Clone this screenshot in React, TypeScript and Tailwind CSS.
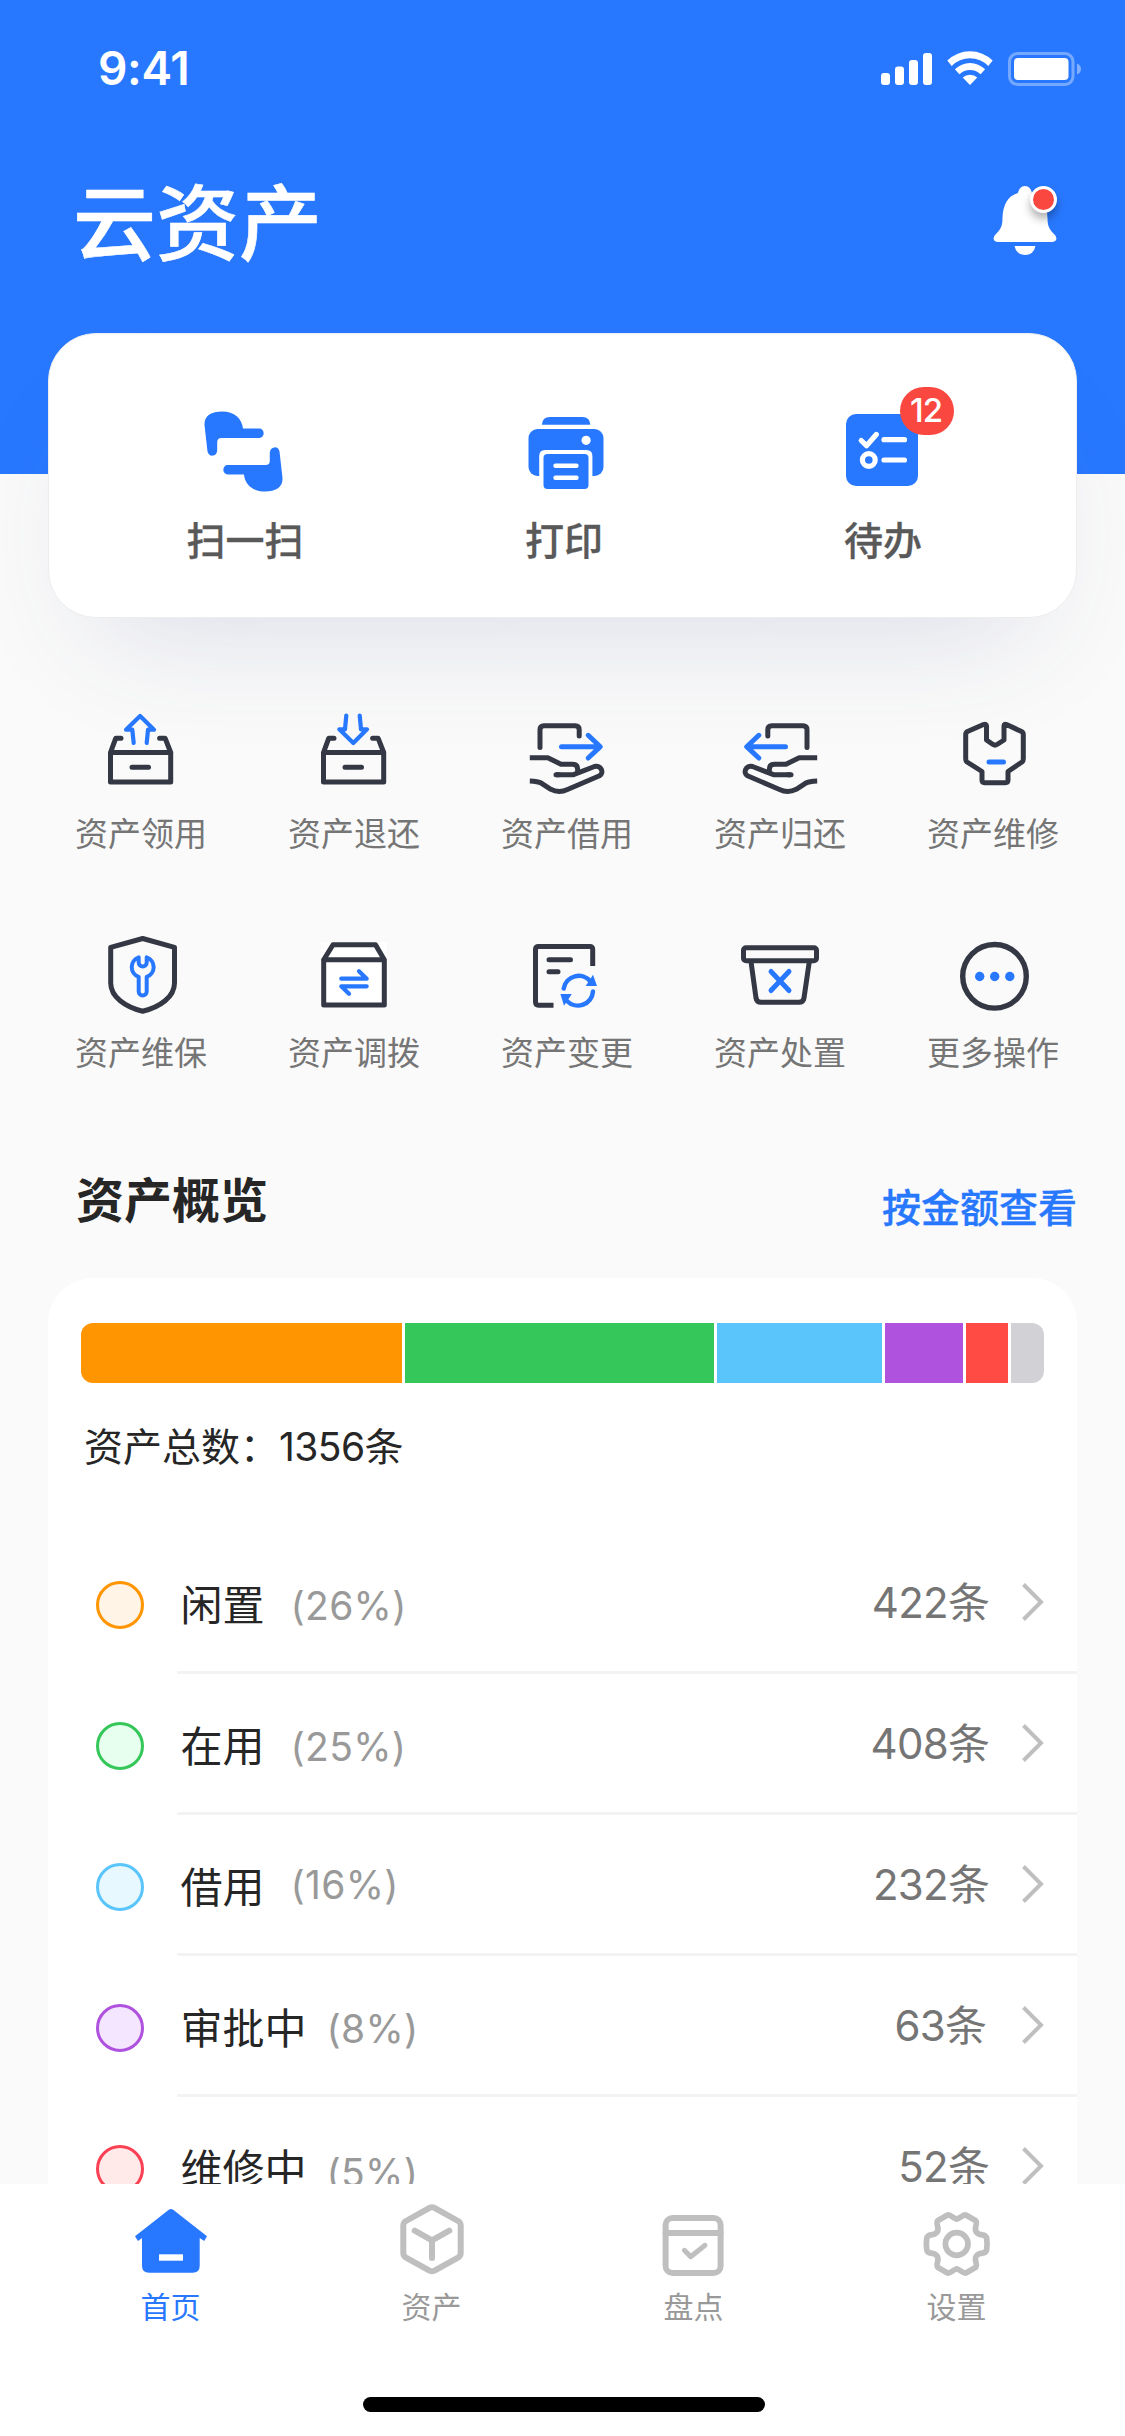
import type { ReactNode } from "react";

const BLUE = "#2878ff";
const DARK = "#343844";
const GREY = "#bfbfbf";

/* ---------- status bar ---------- */

function StatusBar() {
  return (
    <div className="flex h-[132px] items-start justify-between pt-[41px] pl-[98px] pr-[43px]">
      <span className="text-[46px] leading-[54px] font-semibold tracking-[-0.3px]">9:41</span>
      <svg className="mt-[9px]" width="202" height="38" viewBox="880 50 202 38" fill="#fff">
        <rect x="881" y="73" width="9" height="12" rx="3" />
        <rect x="895" y="66.5" width="9" height="18.5" rx="3" />
        <rect x="909" y="60" width="9" height="25" rx="3" />
        <rect x="923" y="53" width="9" height="32" rx="3" />
        <path d="M947.3 60.5a32.500 32.500 0 0 1 45.400 0l-4.400 5.500a25.500 25.500 0 0 0-36.600 0z" />
        <path d="M954.900 69.300a21.500 21.500 0 0 1 30.200 0l-4.500 5a15 15 0 0 0-21.200 0z" />
        <path d="M962.700 77.600a10.500 10.500 0 0 1 14.600 0L970 85z" />
        <rect x="1009.500" y="53.500" width="63.500" height="31" rx="8" fill="none" stroke="#fff" strokeWidth="3" opacity=".36" />
        <path d="M1077 63.500q4 1.500 4 5.500t-4 5.500z" opacity=".42" />
        <rect x="1014" y="58" width="54.500" height="22" rx="4" />
      </svg>
    </div>
  );
}

function Bell() {
  return (
    <div className="relative h-[72px] w-[66px]">
      <svg width="66" height="72" viewBox="991.5 185 66 72" fill="#fff">
        <path d="M1024.500 186c4 0 6 3 7 7C1042 196 1046.500 205 1047 218C1047 228 1050 230 1054 234.500C1057.500 238.500 1056 242 1051 242H998C993 242 991.500 238.500 995 234.500C999 230 1002 228 1002 218C1002.500 205 1007 196 1017.500 193C1018.500 189 1020.500 186 1024.500 186Z" />
        <path d="M1014 246h21q-2 9-10.500 9t-10.500-9z" />
      </svg>
      <span className="absolute top-[1px] left-[37.500px] size-[27px] rounded-full border-[3px] border-white bg-[#fa4840] shadow-[0_6px_9px_rgba(0,0,0,0.3)]" />
    </div>
  );
}

/* ---------- main actions ---------- */

const scanHand =
  "M242.500 428H259a4.200 4.700 0 0 1 0 9.400H221q-4.300 0-4.300 4.300V450a5 6 0 0 1-9.700 1L204 424.500C203.600 415 211 411 221.500 411C234 411 241.500 418 242.500 428Z";

const ScanIcon = (
  <svg width="84" height="84" viewBox="201.500 408.500 84 84" fill={BLUE}>
    <path d={scanHand} />
    <path d={scanHand} transform="rotate(180 243 451)" />
  </svg>
);

const PrintIcon = (
  <svg width="84" height="84" viewBox="521.500 409 84 84" fill={BLUE}>
    <path d="M542.400 424.700q.3-7.700 8-7.700h32.400q7.700 0 8 7.700z" />
    <rect x="529" y="429" width="75" height="47" rx="9" />
    <path d="M539.700 478V456q0-6 6-6h41.200q6 0 6 6v22z" fill="#fff" />
    <rect x="544" y="454" width="45" height="35" rx="4" />
    <path d="M556 465.700h21M556 477.700h21" stroke="#fff" strokeWidth="4.400" strokeLinecap="round" />
    <circle cx="586.600" cy="440.300" r="4.600" fill="#fff" />
  </svg>
);

const TodoIcon = (
  <svg width="84" height="84" viewBox="840 409 84 84" fill="none" stroke="#fff" strokeWidth="5.200" strokeLinecap="round" strokeLinejoin="round">
    <rect x="846" y="414" width="72" height="72" rx="10" fill={BLUE} stroke="none" />
    <path d="M861.200 440.500l5.300 5.200L876.300 434.500M884 439.700h20.500M884 460h20.500" />
    <circle cx="868.800" cy="460" r="6.400" />
  </svg>
);

function MainAction({ icon, label, badge }: { icon: ReactNode; label: string; badge?: string }) {
  return (
    <button className="relative flex w-[120px] flex-col items-center">
      {icon}
      <span className="mt-[18px] pl-[2px] text-[39px] leading-[60px] font-medium whitespace-nowrap text-[#595959] [-webkit-text-stroke:0.3px]">{label}</span>
      {badge && (
        <span className="absolute top-[-22px] left-[78px] flex h-[48px] w-[54px] items-center justify-center rounded-full bg-[#fa4840] pr-[2px] text-[33px] font-medium tracking-[-1px] text-white">
          {badge}
        </span>
      )}
    </button>
  );
}

/* ---------- feature grid ---------- */

function FeatureIcon({ box, children }: { box: string; children: ReactNode }) {
  return (
    <svg width="84" height="90" viewBox={box} fill="none" stroke={DARK} strokeWidth="5" strokeLinecap="round" strokeLinejoin="round">
      {children}
    </svg>
  );
}

const Drawer = (
  <path d="M110.500 752.500h60.200V782h-60.200zM110.500 752.500l5.200-14.200h5.300M170.700 752.500l-5.500-14.200h-5.600M132 767.300h16.500" />
);

const HandBox = (
  <>
    <path d="M540 747.500V729.700q0-4 4-4h31.200q4 0 4 4V736" />
    <path d="M561.500 746.700H600M588.200 735.300L600.300 746.700L588.200 758" stroke={BLUE} />
    <path d="M529.800 757.700H547.800L561 764.300H572.500Q577.600 764.300 577.600 769V771.500M556 774.700H573.500L594.500 766.500C601 764.500 604.500 773 599.500 775.800L567.500 789.500Q559 793.500 550.800 789.300L541.600 783.300Q538 781.300 529.800 781" strokeLinecap="butt" />
    <path d="M556 774.700h3" />
  </>
);

const features: { label: string; icon: ReactNode }[] = [
  {
    label: "资产领用",
    icon: (
      <FeatureIcon box="99 708 84 90">
        {Drawer}
        <path d="M133.700 743l-1.400-13.300H126L140.100 716L154 729.700h-6L146.700 743" stroke={BLUE} strokeWidth="4.200" />
      </FeatureIcon>
    ),
  },
  {
    label: "资产退还",
    icon: (
      <FeatureIcon box="99 708 84 90">
        {Drawer}
        <path d="M133.300 715.500L132 729.300h-5.700L140.300 743L154 729.300h-6L146.700 715.500" stroke={BLUE} strokeWidth="4.200" />
      </FeatureIcon>
    ),
  },
  { label: "资产借用", icon: <FeatureIcon box="525 708 84 90">{HandBox}</FeatureIcon> },
  {
    label: "资产归还",
    icon: (
      <FeatureIcon box="738 708 84 90">
        <g transform="translate(1347 0) scale(-1 1)">{HandBox}</g>
      </FeatureIcon>
    ),
  },
  {
    label: "资产维修",
    icon: (
      <FeatureIcon box="951 708 84 90">
        <path d="M986.500 726Q986.500 723.500 983.500 724.500L967.500 731.500Q965.700 732.500 965.700 734.500V759Q965.700 761 967 762L982 771.500V780Q982 782.700 984.700 782.700H1005.300Q1008 782.700 1008 780V771.500L1022 762Q1023.300 761 1023.300 759V734.500Q1023.300 732.500 1021.500 731.500L1006.500 724.500Q1004 723.500 1004 726V740L997 744.500Q995 745.800 993 744.500L986.500 740Z" />
        <path d="M989 762h14.500" stroke={BLUE} />
      </FeatureIcon>
    ),
  },
  {
    label: "资产维保",
    icon: (
      <FeatureIcon box="99 927 84 90">
        <path d="M142.700 938.500L174.500 947.300V983C174.500 997 160 1007 142.700 1011.300C125.300 1007 110.700 997 110.700 983V947.300Z" />
        <path d="M138.700 957.300A10.300 10.300 0 0 0 138.700 976.800V991.500a4 4 0 0 0 8 0V976.800A10.300 10.300 0 0 0 146.700 957.300V962.500a4 4 0 0 1-8 0Z" stroke={BLUE} strokeWidth="4" />
      </FeatureIcon>
    ),
  },
  {
    label: "资产调拨",
    icon: (
      <FeatureIcon box="312 927 84 90">
        <rect x="321" y="942" width="66" height="66" fill="#fff" stroke="none" />
        <path d="M323.700 959.700H384.300V1005H323.700ZM323.700 959.700L333 944.700H375.500L384.300 959.700" />
        <path d="M341.300 978.700H366.700L359 971.300M366.700 986.300H341.300L349 993.700" stroke={BLUE} strokeWidth="4.200" />
      </FeatureIcon>
    ),
  },
  {
    label: "资产变更",
    icon: (
      <FeatureIcon box="525 927 84 90">
        <path d="M553.500 1005.200H538.500Q535.500 1005.200 535.500 1002V949.500Q535.500 946.500 538.500 946.500H589.700Q592.700 946.500 592.700 949.500V966" strokeLinecap="butt" />
        <path d="M549 959.700h21.500M549 971.700h9" />
        <g stroke={BLUE} strokeWidth="4.500">
          <path d="M563.700 988.500A15.200 15.200 0 0 1 590.500 981.500M593 991.500A15.200 15.200 0 0 1 567 1001" />
          <path d="M593 974.700L597 986H585.700ZM564 1005.700L560.400 994H571.800Z" fill={BLUE} stroke="none" />
        </g>
      </FeatureIcon>
    ),
  },
  {
    label: "资产处置",
    icon: (
      <FeatureIcon box="738 927 84 90">
        <rect x="743.500" y="947.700" width="73" height="13" rx="2.500" />
        <path d="M751 961.700L756 998Q756.700 1002.300 761 1002.300H799Q803.300 1002.300 804 998L809.300 961.700" />
        <path d="M771 971.500L789 990.500M789 971.500L771 990.500" stroke={BLUE} />
      </FeatureIcon>
    ),
  },
  {
    label: "更多操作",
    icon: (
      <FeatureIcon box="951 927 84 90">
        <circle cx="994.500" cy="976.300" r="31.800" strokeWidth="5.400" />
        <g fill={BLUE} stroke="none">
          <circle cx="979.700" cy="976.500" r="4.700" />
          <circle cx="994.700" cy="976.500" r="4.700" />
          <circle cx="1009.800" cy="976.500" r="4.700" />
        </g>
      </FeatureIcon>
    ),
  },
];

/* ---------- overview ---------- */

const segments = [
  "w-[321px] bg-[#ff9500]",
  "w-[309px] bg-[#35c75a]",
  "w-[165px] bg-[#5ac5fa]",
  "w-[78px] bg-[#af52de]",
  "w-[42px] bg-[#ff4b44]",
  "w-[33px] bg-[#d1d1d6]",
];

const rows = [
  { name: "闲置", pct: "(26%)", count: "422", dot: "border-[#ff9500] bg-[#fff4e6]", shift: "ml-[26px] pt-[7px]", end: "mr-[32px]" },
  { name: "在用", pct: "(25%)", count: "408", dot: "border-[#35c75a] bg-[#e7ffee]", shift: "ml-[26px] pt-[7px]", end: "mr-[32px]" },
  { name: "借用", pct: "(16%)", count: "232", dot: "border-[#5ac5fa] bg-[#e7f8ff]", shift: "ml-[26px] pt-[2px]", end: "mr-[32px]" },
  { name: "审批中", pct: "(8%)", count: "63", dot: "border-[#af52de] bg-[#f4e6ff]", shift: "ml-[20px] pt-[7px]", end: "mr-[35px]" },
  { name: "维修中", pct: "(5%)", count: "52", dot: "border-[#fa4154] bg-[#ffe9e9]", shift: "ml-[20px] pt-[13px]", end: "mr-[32px]" },
];

function Row({ name, pct, count, dot, shift, end }: (typeof rows)[number]) {
  return (
    <li className="flex h-[141px] shrink-0 pl-[48px]">
      <span className={`mt-[48px] size-[48px] shrink-0 rounded-full border-[3px] ${dot}`} />
      <div className="ml-[33px] flex flex-1 items-center border-b-[3px] border-[#f3f3f3] pr-[33px] pl-[3.500px]">
        <span className="pt-[7px] text-[42px] leading-[60px] whitespace-nowrap text-[#262626]">{name}</span>
        <span className={`text-[39px] leading-[60px] tracking-[0.3px] whitespace-nowrap text-[#999] ${shift}`}>{pct}</span>
        <span className={`ml-auto pt-px text-[42px] leading-[60px] whitespace-nowrap text-[#757575] ${end}`}>
          <span className="tracking-[-0.7px]">{count}</span>条
        </span>
        <svg className="-mt-px" width="22" height="38" viewBox="0 0 22 38" fill="none" stroke={GREY} strokeWidth="4">
          <path d="M1.500 1.500L19 19L1.500 36.500" />
        </svg>
      </div>
    </li>
  );
}

/* ---------- tab bar ---------- */

const gearHalf =
  "M956.700 2218.800C953 2218.800 951 2214.500 947.500 2215L938 2220.500C934.500 2223.500 941 2228.500 936.500 2232.800C933 2236.500 928 2233 926.800 2238Q925.800 2244 926.800 2250C928 2255 933 2251.500 936.500 2255.200C941 2259.500 934.500 2264.500 938 2267.500L947.500 2273C951 2273.500 953 2269.200 956.700 2269.200";

const tabs: { label: string; color: string; icon: ReactNode }[] = [
  {
    label: "首页",
    color: "text-[#2878ff] pl-[2px]",
    icon: (
      <svg width="78" height="84" viewBox="132 2199 78 84" fill={BLUE}>
        <path d="M168.500 2210Q171 2208 173.500 2210L207 2236.300L204.200 2241L199.700 2238V2265.700Q199.700 2272.700 192.700 2272.700H149Q142 2272.700 142 2265.700V2238L138 2241L135 2236.300Z" />
        <path d="M159 2254.300h24v6.400h-24z" fill="#fff" />
      </svg>
    ),
  },
  {
    label: "资产",
    color: "text-[#999]",
    icon: (
      <svg width="78" height="84" viewBox="393 2199 78 84" fill="none" stroke={GREY} strokeWidth="6" strokeLinecap="round" strokeLinejoin="round">
        <path d="M429.500 2207.800Q432 2206.500 434.500 2207.800L458 2221Q460.700 2222.600 460.700 2225.500V2253Q460.700 2256 458 2257.600L434.500 2270.700Q432 2272 429.500 2270.700L406 2257.600Q403.300 2256 403.300 2253V2225.500Q403.300 2222.600 406 2221Z" />
        <path d="M414.700 2230.700L432 2240.300L449.300 2230.700M432 2240.300V2258" />
      </svg>
    ),
  },
  {
    label: "盘点",
    color: "text-[#999]",
    icon: (
      <svg width="78" height="84" viewBox="655 2199 78 84" fill="none" stroke={GREY} strokeWidth="6" strokeLinecap="round" strokeLinejoin="round">
        <rect x="665.600" y="2218" width="55" height="55" rx="7" />
        <path d="M665.600 2233h55" />
        <path d="M684.400 2250.300l6.300 6.400L705 2245.300" strokeWidth="5" />
      </svg>
    ),
  },
  {
    label: "设置",
    color: "text-[#999] pl-[2px]",
    icon: (
      <svg width="78" height="84" viewBox="918 2199 78 84" fill="none" stroke={GREY} strokeWidth="5.700" strokeLinecap="round" strokeLinejoin="round">
        <path d={gearHalf} />
        <path d={gearHalf} transform="translate(1913.400 0) scale(-1 1)" />
        <circle cx="956.700" cy="2244" r="11.300" />
      </svg>
    ),
  },
];

export default function App() {
  return (
    <div className="flex h-[2436px] w-[1125px] flex-col overflow-hidden bg-[#fafafa] font-['Inter','Noto_Sans_CJK_SC',sans-serif]">
      <main className="flex min-h-0 flex-1 flex-col overflow-hidden">
        <header className="h-[474px] shrink-0 bg-[#2878ff] text-white">
          <StatusBar />
          <div className="flex items-start justify-between pr-[67px] pl-[73px]">
            <h1 className="mt-[41px] text-[83px] leading-[102px] font-medium [-webkit-text-stroke:0.6px]">云资产</h1>
            <div className="mt-[53px]">
              <Bell />
            </div>
          </div>
        </header>

        <section className="relative mx-[48px] -mt-[141px] flex h-[285px] shrink-0 justify-between rounded-[48px] border-[1.500px] border-[#ededed] bg-white pt-[75px] pr-[134px] pl-[135px] shadow-[0_60px_120px_-50px_rgba(61,72,128,0.17)]">
          <MainAction icon={ScanIcon} label="扫一扫" />
          <MainAction icon={PrintIcon} label="打印" />
          <MainAction icon={TodoIcon} label="待办" badge="12" />
        </section>

        <section className="relative mt-[90px] ml-[34px] grid w-[1065px] shrink-0 grid-cols-5 gap-y-[69px] self-start">
          {features.map((f) => (
            <button key={f.label} className="flex w-[213px] flex-col items-center">
              {f.icon}
              <span className="mt-[12px] pl-px text-[33px] leading-[48px] whitespace-nowrap text-[#757575]">{f.label}</span>
            </button>
          ))}
        </section>

        <div className="mt-[90px] flex h-[111px] shrink-0 items-start justify-between pr-[48px] pl-[76px]">
          <h2 className="text-[48px] leading-[68px] font-semibold text-[#262626]">资产概览</h2>
          <a className="mt-[11px] text-[39px] leading-[60px] font-medium text-[#2878ff] [-webkit-text-stroke:0.3px]">按金额查看</a>
        </div>

        <section className="mx-[48px] flex h-[1100px] shrink-0 flex-col rounded-t-[45px] bg-white pt-[45px]">
          <div className="mx-[33px] flex h-[60px] shrink-0 gap-[3px] overflow-hidden rounded-[12px]">
            {segments.map((s) => (
              <div key={s} className={`h-full shrink-0 ${s}`} />
            ))}
          </div>
          <p className="mt-[34px] ml-[36px] h-[116px] text-[39px] leading-[60px] text-[#262626]">
            资产总数：<span className="tracking-[-0.6px]">1356</span>条
          </p>
          <ul className="flex flex-col">
            {rows.map((r) => (
              <Row key={r.name} {...r} />
            ))}
          </ul>
        </section>
      </main>

      <nav className="flex h-[252px] shrink-0 flex-col items-center bg-white">
        <div className="flex w-[1048px] justify-between pt-[15px]">
          {tabs.map((t) => (
            <button key={t.label} className={`flex w-[262px] flex-col items-center text-[30px] leading-[44px] ${t.color}`}>
              {t.icon}
              <span className="mt-[2px]">{t.label}</span>
            </button>
          ))}
        </div>
        <div className="mt-[68px] ml-[3px] h-[15px] w-[402px] rounded-full bg-black" />
      </nav>
    </div>
  );
}
